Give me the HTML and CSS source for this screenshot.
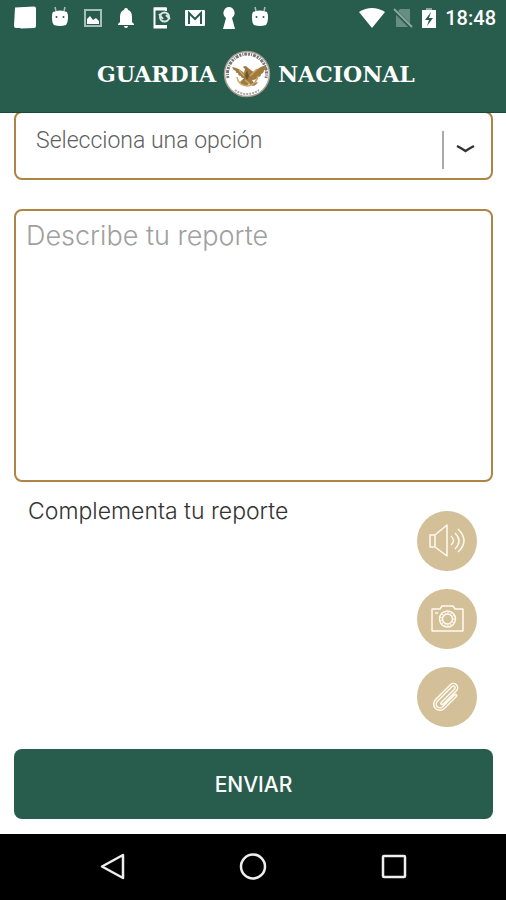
FILE: index.html
```html
<!DOCTYPE html>
<html lang="es">
<head>
    <meta charset="UTF-8">
    <meta name="viewport" content="width=device-width, initial-scale=1.0">
    <title>Guardia Nacional</title>
    <link rel="stylesheet" href="styles.css">
</head>
<body>
    <header class="header">
        <!-- Status bar -->
        <div class="status-bar">
            <div class="status-group notifications">
                <svg width="24" height="24" viewBox="0 0 24 24"><path d="M2 1.500l19-1q2 0 2 2V20q0 2-2 2L8 22.500 7 22H3q-2 0-2-2z" fill="#fff"/></svg>
                <svg width="18" height="24" viewBox="0 0 18 24"><path d="M4 1l1 4M14 1l-1 4" stroke="#a9beb7" stroke-width="1.500"/><path d="M2 6q7-3 14 0 1 2 1 6t-2 7q-6 2-12 0-2-2-2-7t1-6z" fill="#fff"/><circle cx="5.500" cy="11" r="1" fill="#285c4d"/><circle cx="12.500" cy="11" r="1" fill="#285c4d"/></svg>
                <svg width="20" height="24" viewBox="0 0 20 24"><rect x="2" y="4" width="16" height="16" fill="none" stroke="#a9beb7" stroke-width="2"/><path d="M4 18v-5l3-3 3 4 3-2 3 3v3z" fill="#fff"/></svg>
                <svg width="18" height="24" viewBox="0 0 18 24"><path d="M9 2q2 0 2 2 4 1 4 7v5l2 2v1H1v-1l2-2v-5q0-6 4-7 0-2 2-2zM7 20h4q0 2-2 2t-2-2z" fill="#fff"/></svg>
                <svg width="22" height="24" viewBox="0 0 22 24"><path d="M17 5V2.500H5.500v19H17V19" fill="none" stroke="#fff" stroke-width="2"/><path d="M5 3h12M5 20.500h12" stroke="#fff" stroke-width="3"/><circle cx="15.500" cy="11" r="4.500" fill="none" stroke="#dce6e2" stroke-width="2"/><path d="M10 8l4 5M17 9l4 4" stroke="#dce6e2" stroke-width="2"/></svg>
                <svg width="22" height="24" viewBox="0 0 22 24"><rect x="0" y="4" width="20" height="16" rx="1" fill="#fff"/><path d="M4 18V7l6 6 6-6v11" fill="none" stroke="#285c4d" stroke-width="2"/></svg>
                <svg width="16" height="24" viewBox="0 0 16 24"><path d="M8 1a6 6 0 0 1 4 10l-1 1 3 11H2l3-11-1-1A6 6 0 0 1 8 1z" fill="#fff"/></svg>
                <svg width="18" height="24" viewBox="0 0 18 24"><path d="M4 1l1 4M14 1l-1 4" stroke="#a9beb7" stroke-width="1.500"/><path d="M2 6q7-3 14 0 1 2 1 6t-2 7q-6 2-12 0-2-2-2-7t1-6z" fill="#fff"/><circle cx="5.500" cy="11" r="1" fill="#285c4d"/><circle cx="12.500" cy="11" r="1" fill="#285c4d"/></svg>
            </div>
            <div class="status-group system">
                <svg width="26" height="24" viewBox="0 0 26 24"><path d="M0 6q13-8 26 0L13 22z" fill="#fff"/></svg>
                <svg width="20" height="24" viewBox="0 0 20 24"><path d="M7 3h10v18H3V7z" fill="#688d82"/><path d="M0 3l19 19" stroke="#285c4d" stroke-width="4"/><path d="M1 3l18 18" stroke="#8ba89f" stroke-width="2"/></svg>
                <svg width="16" height="24" viewBox="0 0 16 24"><path d="M5 2h6v3H5z" fill="#8ba89f"/><path d="M1 4h14v18H1z" fill="#fff"/><path d="M10 6l-6 8h4l-2 6 6-8H8z" fill="#285c4d"/></svg>
                <span class="clock">18:48</span>
            </div>
        </div>

        <!-- Brand -->
        <h1 class="brand">
            <span class="brand-left">GUARDIA</span>
            <svg class="seal" width="48" height="48" viewBox="0 0 48 48" aria-hidden="true">
                <circle cx="24" cy="24" r="22.500" fill="#fff" stroke="#a79d91" stroke-width="1.500"/>
                <path d="M5 28a19.500 19.500 0 1 1 38 0" fill="none" stroke="#77777b" stroke-width="3" stroke-dasharray="2 1 1 1 3 1"/>
                <path d="M12 40a20 20 0 0 0 24 0" fill="none" stroke="#aaa" stroke-width="2" stroke-dasharray="2 1"/>
                <path d="M24 17q-2-2-4 0l2 2-1 4q-5-5-12-6 1 3 4 4-1 2 2 2 0 3 3 3 0 2 3 2l-4 4q1 3 4 3l2 1 3-2 4 2q4-1 5-4l-4 1-2-3q5 0 6-3 3 0 3-3 3-1 3-4 3-1 2-5-7 2-12 7l-2-1z" fill="#a17a3e"/>
                <path d="M14 27q1 8 10 9 9-1 11-10M16 20l5 6M34 19l-7 7M22 30l5 4" fill="none" stroke="#caa66e" stroke-width="1.500"/>
                <path d="M24 20l2 6-2 4-2-4z" fill="#6e5430"/>
            </svg>
            <span class="brand-right">NACIONAL</span>
        </h1>
    </header>

    <main class="content">
        <form class="report-form">
            <div class="select-box">
                <select class="option-select" aria-label="Tipo de reporte">
                    <option>Selecciona una opción</option>
                </select>
                <svg class="select-arrow" width="34" height="38" viewBox="0 0 34 38" aria-hidden="true">
                    <path d="M1 0v38" stroke="#aaa" stroke-width="2"/>
                    <path d="M15 15q4 2 8.500 5 4.500-3 8.500-5" fill="none" stroke="#333" stroke-width="2.500"/>
                </svg>
            </div>

            <textarea class="report-text" placeholder="Describe tu reporte" aria-label="Describe tu reporte"></textarea>

            <div class="attachments">
                <p class="attachments-title">Complementa tu reporte</p>
                <div class="attachment-buttons">
                    <button type="button" class="round-button" aria-label="Audio">
                        <svg width="40" height="40" viewBox="0 0 40 40">
                            <path d="M8 14v12H3V14zM8 14l12-10v31L8 26M24 15q5 5 0 9M28 12q8 8 0 16M31 8q12 12 0 23"/>
                        </svg>
                    </button>
                    <button type="button" class="round-button" aria-label="Cámara">
                        <svg width="40" height="40" viewBox="0 0 40 40">
                            <path d="M5 10h8l2-3h11l2 3h8v22H5z"/>
                            <circle cx="20.500" cy="20" r="8"/>
                            <circle cx="20.500" cy="20" r="5"/>
                            <circle cx="20.500" cy="20" r="6.500" stroke-dasharray="1 2"/>
                            <path d="M8 14h3"/>
                        </svg>
                    </button>
                    <button type="button" class="round-button" aria-label="Adjuntar archivo">
                        <svg width="40" height="40" viewBox="0 0 40 40">
                            <g transform="translate(20 20) rotate(-45)">
                                <path class="clip-wire" d="M7 5H-10a5 5 0 0 1 0-10H11a3 3 0 0 1 0 6H-8"/>
                                <path class="clip-core" d="M7 5H-10a5 5 0 0 1 0-10H11a3 3 0 0 1 0 6H-8"/>
                            </g>
                        </svg>
                    </button>
                </div>
            </div>

            <button type="submit" class="submit-button">ENVIAR</button>
        </form>
    </main>

    <!-- Android navigation -->
    <nav class="nav-bar">
        <button type="button" class="nav-button" aria-label="Atrás">
            <svg width="30" height="30" viewBox="0 0 30 30"><path d="M26 3v23L5 14.500z"/></svg>
        </button>
        <button type="button" class="nav-button" aria-label="Inicio">
            <svg width="30" height="30" viewBox="0 0 30 30"><circle cx="15" cy="14.500" r="12"/></svg>
        </button>
        <button type="button" class="nav-button" aria-label="Recientes">
            <svg width="30" height="30" viewBox="0 0 30 30"><rect x="4" y="4" width="22" height="21" rx="1"/></svg>
        </button>
    </nav>
</body>
</html>
```

FILE: styles.css
```css
* {
    box-sizing: border-box;
}
body {
    margin: 0;
    min-height: 100vh;
    display: flex;
    flex-direction: column;
    background-color: white;
    font-family: Inter, sans-serif;
}
button {
    padding: 0;
    border: none;
    cursor: pointer;
}
svg {
    display: block;
    flex-shrink: 0;
}

/* Header */
.header {
    position: relative;
    z-index: 1;
    background-color: #285c4d;
    border-bottom: 1px solid #174a38;
    color: white;
    padding-bottom: 14px;
}
.status-bar {
    display: flex;
    justify-content: space-between;
    align-items: center;
    height: 36px;
    padding: 0 10px 0 13px;
}
.status-group {
    display: flex;
    align-items: center;
}
.notifications {
    gap: 14px;
}
.system {
    gap: 8px;
}
.clock {
    font-family: Roboto, sans-serif;
    font-size: 20px;
    font-weight: 500;
}
.brand {
    display: grid;
    grid-template-columns: 1fr auto 1fr;
    align-items: center;
    gap: 7px;
    margin: 14px 0 0;
    padding-right: 12px;
    font-family: "DejaVu Serif", serif;
    font-size: 22px;
    font-weight: bold;
    line-height: 48px;
}
.brand-left {
    text-align: right;
}

/* Report form */
.content {
    flex: 1;
    padding: 0 13px 15px 14px;
}
.report-form {
    display: flex;
    flex-direction: column;
    margin-top: -2px;
}
.select-box {
    position: relative;
}
.option-select {
    display: block;
    width: 100%;
    height: 69px;
    padding: 0 60px 10px 20px;
    appearance: none;
    background-color: white;
    border: 2px solid #ae8544;
    border-radius: 8px;
    color: #606060;
    font-family: Roboto, sans-serif;
    font-size: 23px;
    font-weight: 300;
}
.select-arrow {
    position: absolute;
    top: 20px;
    right: 17px;
    pointer-events: none;
}
.report-text {
    height: 273px;
    margin-top: 29px;
    padding: 10px;
    resize: none;
    border: 2px solid #ae8544;
    border-radius: 8px;
    font-family: Inter, sans-serif;
    font-size: 27px;
    font-weight: 300;
    line-height: 30px;
}
.report-text::placeholder {
    color: #a0a0a0;
}
.attachments {
    display: flex;
    justify-content: space-between;
    align-items: flex-start;
    padding: 16px 16px 0 14px;
}
.attachments-title {
    margin: 0;
    color: #333;
    font-size: 23px;
    font-weight: 300;
    line-height: 26px;
}
.attachment-buttons {
    display: flex;
    flex-direction: column;
    gap: 18px;
    padding-top: 13px;
}
.round-button {
    display: flex;
    justify-content: center;
    align-items: center;
    width: 60px;
    height: 60px;
    background-color: #d3bf98;
    border-radius: 50%;
}
.round-button svg {
    fill: none;
    stroke: #fffaf0;
    stroke-width: 1.5px;
    stroke-linejoin: round;
}
.round-button .clip-wire {
    stroke-width: 4px;
    stroke-linecap: round;
}
.round-button .clip-core {
    stroke: #d3bf98;
    stroke-width: 1px;
}
.submit-button {
    height: 70px;
    margin-top: 22px;
    background-color: #285c4d;
    border-radius: 8px;
    color: white;
    font-family: Inter, sans-serif;
    font-size: 21px;
    font-weight: 500;
}

/* Navigation bar */
.nav-bar {
    display: flex;
    justify-content: center;
    align-items: center;
    gap: 111px;
    height: 66px;
    background-color: black;
}
.nav-button {
    background: none;
}
.nav-button svg {
    fill: none;
    stroke: #eee;
    stroke-width: 2.5px;
    stroke-linejoin: round;
}
```
